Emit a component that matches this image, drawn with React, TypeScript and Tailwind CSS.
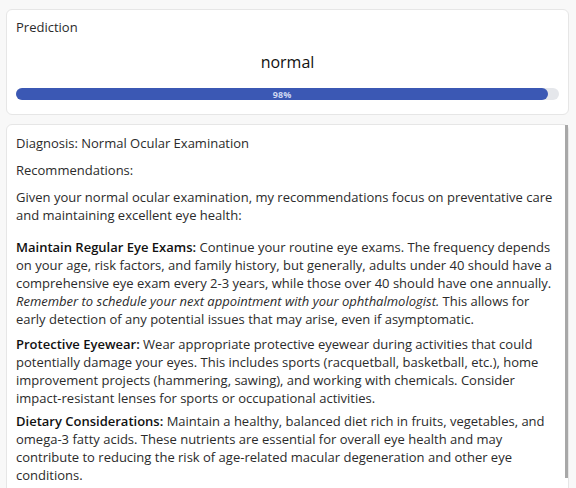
import React from 'react';

const font = { fontFamily: '"Open Sans", "Liberation Sans", sans-serif' };

export default function App() {
    const confidence = 98;

    return (
        <div
            className="h-[488px] w-[576px] overflow-hidden bg-[#f8f8f8] pt-[9px] pl-[6px] text-[#2b2b2b]"
            style={font}
        >
            {/* Prediction card */}
            <div className="w-[563px] rounded-md border border-[#e6e6e6] bg-white px-[9px] pt-[8px] pb-[14px]">
                <div className="text-[13px] leading-[18px] text-[#2b2b2b]">Prediction</div>
                <div className="mt-[14px] text-center text-[16px] leading-[24px] text-[#111]">normal</div>
                <div className="mt-[14px] h-[12px] w-full rounded-full bg-[#e5e7eb]">
                    <div
                        className="flex h-full items-center justify-center rounded-full bg-[#3b58b4]"
                        style={{ width: `${confidence}%` }}
                    >
                        <span className="text-[9px] font-bold leading-none text-[#ced7f1]">{confidence}%</span>
                    </div>
                </div>
            </div>

            {/* Diagnosis card */}
            <div className="relative mt-[9px] h-[420px] w-[563px] rounded-md border border-[#e6e6e6] bg-white">
                <div className="px-[9px] pt-[9px] text-[13px] leading-[18px] text-[#2b2b2b]">
                    <p>Diagnosis: Normal Ocular Examination</p>
                    <p className="mt-[9px]">Recommendations:</p>
                    <p className="mt-[9px]">
                        Given your normal ocular examination, my recommendations focus on preventative care
                        and maintaining excellent eye health:
                    </p>
                    <p className="mt-[14px]">
                        <strong className="font-semibold text-[#111]">Maintain Regular Eye Exams:</strong> Continue
                        your routine eye exams. The frequency depends on your age, risk factors, and family
                        history, but generally, adults under 40 should have a comprehensive eye exam every 2-3
                        years, while those over 40 should have one annually.{' '}
                        <em>Remember to schedule your next appointment with your ophthalmologist.</em> This
                        allows for early detection of any potential issues that may arise, even if asymptomatic.
                    </p>
                    <p className="mt-[7px]">
                        <strong className="font-semibold text-[#111]">Protective Eyewear:</strong> Wear
                        appropriate protective eyewear during activities that could potentially damage your
                        eyes. This includes sports (racquetball, basketball, etc.), home improvement projects
                        (hammering, sawing), and working with chemicals. Consider impact-resistant lenses for
                        sports or occupational activities.
                    </p>
                    <p className="mt-[5px]">
                        <strong className="font-semibold text-[#111]">Dietary Considerations:</strong> Maintain a
                        healthy, balanced diet rich in fruits, vegetables, and omega-3 fatty acids. These
                        nutrients are essential for overall eye health and may contribute to reducing the risk
                        of age-related macular degeneration and other eye conditions.
                    </p>
                </div>

                {/* scrollbar thumb */}
                <div className="absolute right-0 top-0 h-[353px] w-[3px] bg-[#a8a8a8]" />
            </div>
        </div>
    );
}
